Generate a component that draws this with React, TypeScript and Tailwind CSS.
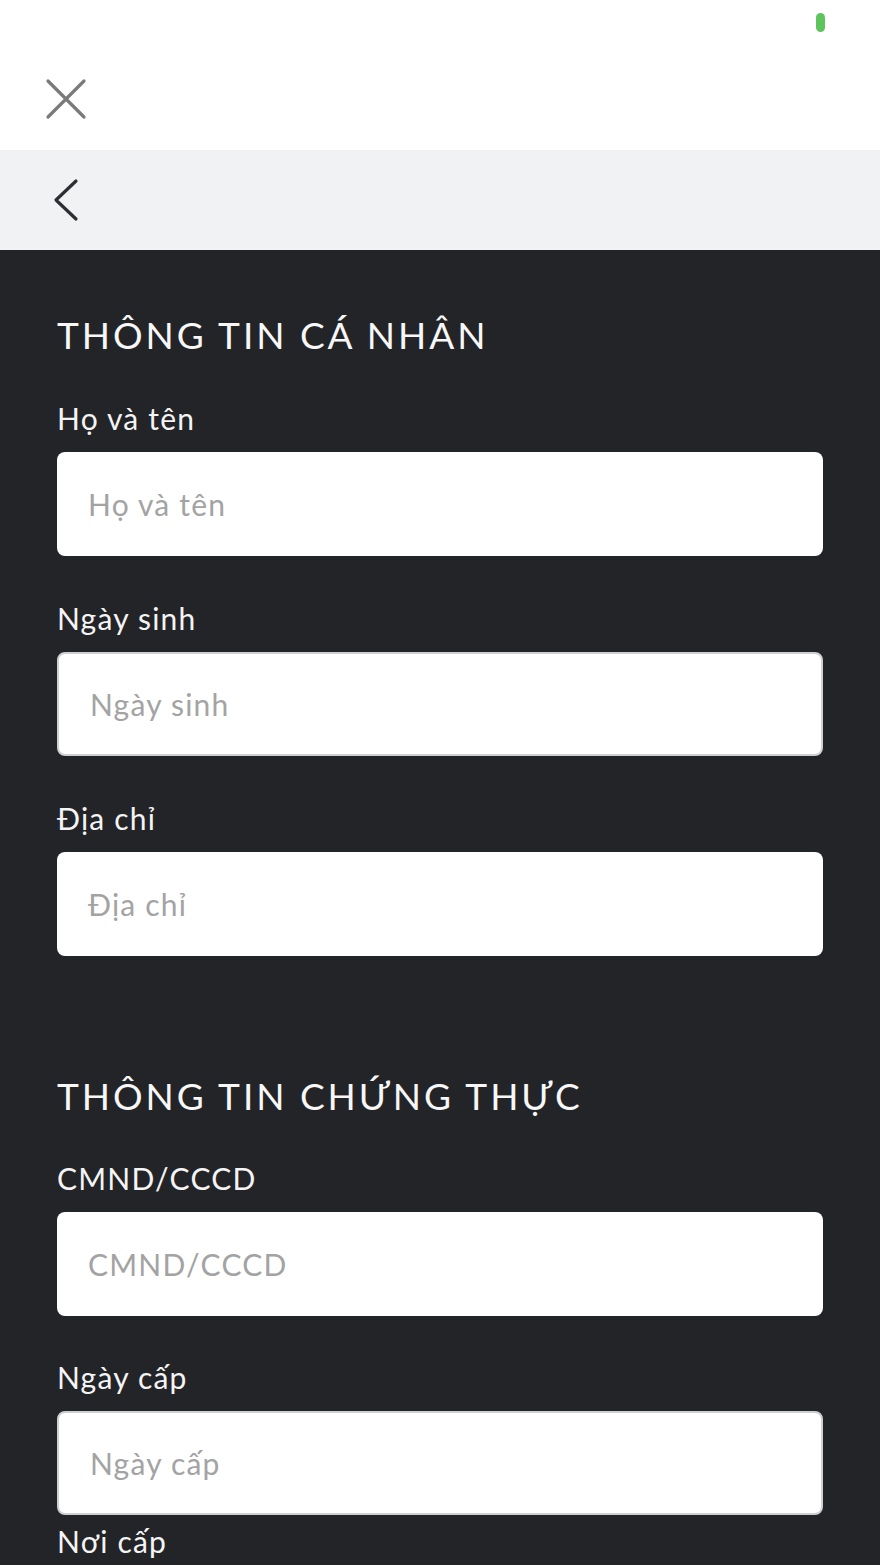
import React from 'react';

const Field = ({
  label,
  bordered = false,
  gapAfter = 'mb-[42px]',
}: {
  label: string;
  bordered?: boolean;
  gapAfter?: string;
}) => (
  <div className={gapAfter}>
    <div className="h-10 leading-10 text-[30px] tracking-[0.04em] text-[#f4f4f5] mb-[14px]">{label}</div>
    <div
      className={`h-[104px] rounded-lg bg-white flex items-center pl-[31px] text-[30px] tracking-[0.04em] text-[#a3a3a3] ${
        bordered ? 'border-2 border-[#cfcfd2]' : ''
      }`}
    >
      {label}
    </div>
  </div>
);

export default function App() {
  return (
    <div className="w-[880px] h-[1565px] overflow-hidden bg-[#232427] font-['Lato','Open_Sans',sans-serif]">
      {/* top area */}
      <div className="h-[150px] bg-white relative">
        <div className="absolute left-[816px] top-[13px] w-[9px] h-[19px] rounded-full bg-[#5ec45e]" />
        <div className="absolute left-[45px] top-[78px]">
          <svg width="42" height="42" viewBox="0 0 42 42" fill="none">
            <path d="M3 3L39 39M39 3L3 39" stroke="#7a7a7a" strokeWidth="3.2" strokeLinecap="round" />
          </svg>
        </div>
      </div>

      {/* back bar */}
      <div className="h-[100px] bg-[#f1f2f4] flex items-center pl-[52px]">
        <svg width="28" height="44" viewBox="0 0 28 44" fill="none">
          <path d="M24 3L4 22L24 41" stroke="#2e2f33" strokeWidth="3.2" strokeLinecap="round" strokeLinejoin="round" />
        </svg>
      </div>

      {/* form */}
      <div className="px-[57px] pt-[63px]">
        <h2 className="h-11 leading-[44px] text-[37px] tracking-[0.08em] text-[#f7f7f8] mb-[41px]">
          THÔNG TIN CÁ NHÂN
        </h2>
        <Field label="Họ và tên" />
        <Field label="Ngày sinh" bordered />
        <Field label="Địa chỉ" gapAfter="mb-[118px]" />

        <h2 className="h-11 leading-[44px] text-[37px] tracking-[0.08em] text-[#f7f7f8] mb-10">
          THÔNG TIN CHỨNG THỰC
        </h2>
        <Field label="CMND/CCCD" gapAfter="mb-[41px]" />
        <Field label="Ngày cấp" bordered gapAfter="mb-[6px]" />
        <div className="h-10 leading-10 text-[30px] tracking-[0.04em] text-[#f4f4f5]">Nơi cấp</div>
      </div>
    </div>
  );
}
